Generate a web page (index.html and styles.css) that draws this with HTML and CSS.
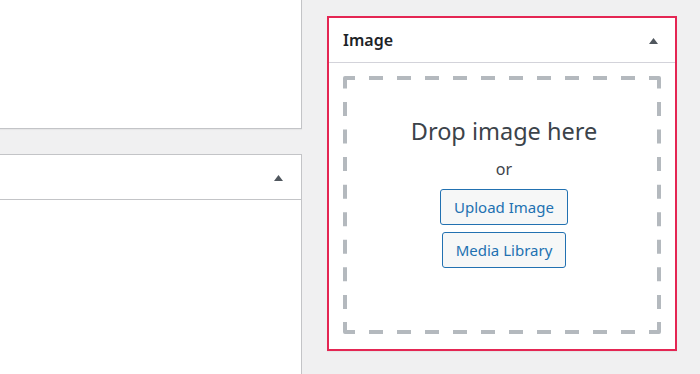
FILE: index.html
```html
<!DOCTYPE html>
<html lang="en">
<head>
<meta charset="utf-8">
<title>Image box</title>
<link rel="stylesheet" href="styles.css">
</head>
<body>
<div class="page">
  <div class="col-main">
    <div class="postbox postbox-top"></div>
    <div class="postbox postbox-tall">
      <div class="postbox-header">
        <span class="toggle"><svg width="9" height="6" viewBox="0 0 9 6"><polygon points="0,6 4.5,0 9,6" fill="#50575e"/></svg></span>
      </div>
    </div>
  </div>
  <div class="col-side">
    <div class="postbox postbox-active">
      <div class="postbox-header">
        <h2 class="postbox-title">Image</h2>
        <span class="toggle"><svg width="9" height="6" viewBox="0 0 9 6"><polygon points="0,6 4.5,0 9,6" fill="#50575e"/></svg></span>
      </div>
      <div class="inside">
        <div class="dropzone">
          <p class="drop-title">Drop image here</p>
          <p class="drop-or">or</p>
          <button class="btn btn-upload" type="button">Upload Image</button>
          <button class="btn btn-library" type="button">Media Library</button>
        </div>
      </div>
    </div>
  </div>
</div>
</body>
</html>
```

FILE: styles.css
```css
html, body {
  margin: 0;
  padding: 0;
  background: #f0f0f1;
  font-family: "Noto Sans", "Open Sans", sans-serif;
  color: #3c434a;
  overflow: hidden;
  height: 374px;
}

.page {
  display: flex;
  align-items: flex-start;
  gap: 25px;
  margin-left: -1px;
}

.col-main {
  width: 303px;
  margin-top: -1px;
  display: flex;
  flex-direction: column;
  gap: 25px;
}

.col-side {
  width: 350px;
  margin-top: 16px;
}

.postbox {
  box-sizing: border-box;
  background: #fff;
  border: 1px solid #c3c4c7;
  box-shadow: 0 1px 1px rgba(0, 0, 0, 0.04);
}

.postbox-top {
  height: 130px;
}

.postbox-tall {
  height: 220px;
  border-bottom: none;
  box-shadow: none;
}

.postbox-header {
  height: 44px;
  border-bottom: 1px solid #c3c4c7;
  display: flex;
  align-items: center;
  justify-content: flex-end;
  padding: 0 18px 0 14px;
}

.postbox-active {
  border: 2px solid #e42653;
}

.postbox-active .postbox-header {
  justify-content: space-between;
  padding-right: 17px;
  border-bottom-color: #d3d3da;
}

.postbox-title {
  margin: 0;
  font-size: 16px;
  font-weight: 600;
  color: #1d2327;
  line-height: 20px;
}

.toggle {
  display: flex;
  margin-top: 1px;
}

.inside {
  padding: 13px 14px 15px;
}

.dropzone {
  box-sizing: border-box;
  height: 258px;
  display: flex;
  flex-direction: column;
  align-items: center;
  padding: 39px 0 0 4px;
  background-repeat: no-repeat;
  background-image: url("data:image/svg+xml,%3Csvg xmlns='http://www.w3.org/2000/svg' width='318' height='258' viewBox='0 0 318 258'%3E%3Cg fill='%23b4b9be'%3E%3Cpath d='M0 12V2a2 2 0 0 1 2-2h10v4H4v8z'/%3E%3Cpath d='M306 0h10a2 2 0 0 1 2 2v10h-4V4h-8z'/%3E%3Cpath d='M318 246v10a2 2 0 0 1-2 2h-10v-4h8v-8z'/%3E%3Cpath d='M12 258H2a2 2 0 0 1-2-2v-10h4v8h8z'/%3E%3C/g%3E%3Cg stroke='%23b4b9be' stroke-width='4' fill='none'%3E%3Cpath d='M12 2H306M12 256H306' stroke-dasharray='14 14' stroke-dashoffset='14'/%3E%3Cpath d='M2 12V246M316 12V246' stroke-dasharray='14 13.56' stroke-dashoffset='13.56'/%3E%3C/g%3E%3C/svg%3E");
}

.drop-title {
  margin: 0;
  font-size: 23.5px;
  line-height: 32px;
  color: #3c434a;
}

.drop-or {
  margin: 10px 0 0;
  font-size: 16px;
  line-height: 24px;
  color: #3c434a;
}

.btn {
  box-sizing: border-box;
  height: 36px;
  padding: 0 13px;
  border: 1px solid #2271b1;
  border-radius: 3px;
  background: #f6f7f7;
  color: #2271b1;
  font-family: "Noto Sans", "Open Sans", sans-serif;
  font-size: 15px;
  line-height: 34px;
}

.btn-upload {
  margin-top: 8px;
}

.btn-library {
  margin-top: 7px;
}
```
